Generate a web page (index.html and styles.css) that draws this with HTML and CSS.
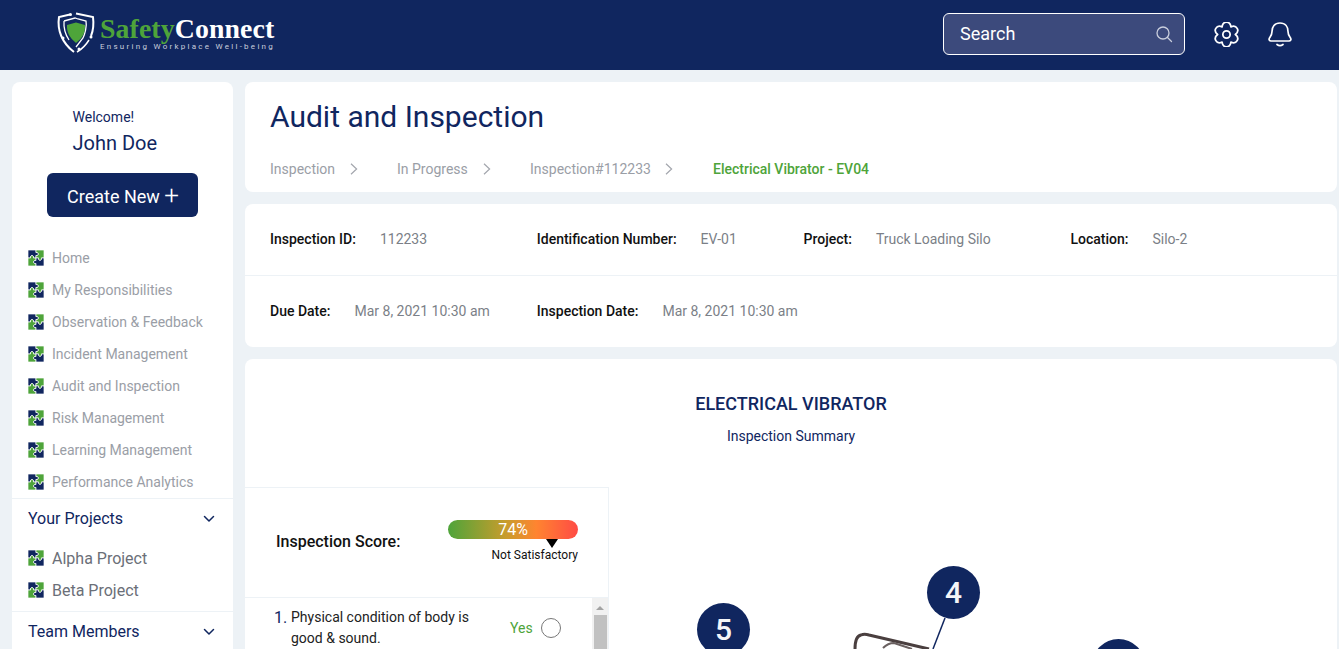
FILE: index.html
```html
<!DOCTYPE html>
<html lang="en">
<head>
<meta charset="utf-8">
<title>Audit and Inspection</title>
<link rel="stylesheet" href="styles.css">
</head>
<body>
<svg class="defs" width="0" height="0" aria-hidden="true">
  <symbol id="puzzle" viewBox="0 0 16 16">
    <rect width="16" height="16" fill="#fff"/>
    <g stroke="#fff" stroke-width=".7">
      <path fill="#10265f" d="M0 0h8v2.600c1.500-.6 2.400.5 2.400 1.400S9.500 6 8 5.400V8H5.400c.6-1.500-.5-2.400-1.400-2.400S2 6.500 2.600 8H0z"/>
      <path fill="#4ea43a" d="M8 0h8v8h-2.600c.6 1.500-.5 2.400-1.400 2.400S10 9.500 10.600 8H8V5.400c1.500.6 2.400-.5 2.400-1.400S9.500 2 8 2.600z"/>
      <path fill="#4ea43a" d="M0 8h2.600c-.6-1.500.5-2.400 1.400-2.400S6 6.500 5.400 8H8v2.600c-1.500-.6-2.400.5-2.400 1.400S6.500 14 8 13.400V16H0z"/>
      <path fill="#10265f" d="M8 8h2.600c-.6 1.500.5 2.400 1.400 2.400s2-.9 1.400-2.400H16v8H8v-2.600c-1.500.6-2.400-.5-2.400-1.400s.9-2 2.400-1.400z"/>
    </g>
  </symbol>
  <symbol id="chev" viewBox="0 0 12 8">
    <path d="M1.500 1.500 6 6l4.500-4.500" fill="none" stroke="#10265f" stroke-width="1.500" stroke-linecap="round" stroke-linejoin="round"/>
  </symbol>
  <symbol id="crumb" viewBox="0 0 8 12">
    <path d="M1 .8 6.600 6 1 11.200" fill="none" stroke="#a3a6ad" stroke-width="1.200"/>
  </symbol>
</svg>

<header class="topbar">
  <div class="logo">
    <svg class="logo-mark" width="40" height="42" viewBox="0 0 40 42" fill="none">
      <path d="M14 2.500 3 5c-2 13 3 26 15 35" stroke="#fff" stroke-width="2"/>
      <path d="M20 1.500 37 5c1 8 .5 13-2 19" stroke="#fff" stroke-width="2"/>
      <path d="M33 28c-3 5-7 9-12 12" stroke="#fff" stroke-width="1.500"/>
      <path d="M8 9l11-3 3 1 8 2c1 5-1 13-3 17l-7 9M8 9c-.5 7 1 13 5 19" stroke="#fff" stroke-width="1.300"/>
      <path d="M11 13 20 10.500l9 2.500c.3 7-1.500 12-9 18-7-6-9.300-11-9-18z" fill="#4ea43a"/>
      <g fill="#fff">
        <circle cx="14.500" cy="2.500" r="1.500"/><circle cx="35" cy="25" r="1.500"/><circle cx="7" cy="26" r="1.500"/><circle cx="23" cy="37" r="1.500"/>
      </g>
    </svg>
    <div class="logo-text">
      <div class="logo-name"><span class="logo-green">Safety</span>Connect</div>
      <div class="logo-tag">Ensuring Workplace Well-being</div>
    </div>
  </div>
  <div class="top-actions">
    <div class="search">
      <span>Search</span>
      <svg width="18" height="18" viewBox="0 0 18 18"><circle cx="8" cy="8" r="6" fill="none" stroke="#c9cedd" stroke-width="1.300"/><path d="m12.500 12.500 4 4" stroke="#c9cedd" stroke-width="1.300" stroke-linecap="round"/></svg>
    </div>
    <svg class="gear" width="25" height="25" viewBox="1 1 24 24" fill="none" stroke="#fff" stroke-width="1.700" stroke-linejoin="round">
      <circle cx="13" cy="13" r="3.500"/>
      <path d="M8.750 5.640C9.500-.3 16.500-.3 17.250 5.640 22.770 3.320 26.270 9.380 21.500 13 26.270 16.620 22.770 22.680 17.250 20.360 16.500 26.300 9.500 26.300 8.750 20.360 3.230 22.680-.27 16.620 4.500 13-.27 9.380 3.230 3.320 8.750 5.640z"/>
    </svg>
    <svg class="bell" width="26" height="26" viewBox="0 0 26 26" fill="none" stroke="#fff" stroke-width="1.700" stroke-linecap="round" stroke-linejoin="round">
      <path d="M13 2C7.500 2 5 6 5 10.500 5 14 3.500 15.500 2.500 17 1.500 18.700 2.500 20 4 20H22c1.500 0 2.500-1.300 1.500-3C22.500 15.500 21 14 21 10.500 21 6 18.500 2 13 2z"/>
      <path d="M10 23.500c1.700 1.200 4.300 1.200 6 0"/>
    </svg>
  </div>
</header>

<div class="layout">
  <aside class="sidebar">
    <div class="welcome">
      <div class="welcome-small">Welcome!</div>
      <div class="welcome-name">John Doe</div>
    </div>
    <button class="create" type="button">Create New <span class="plus">+</span></button>
    <ul class="nav">
      <li><svg class="pz"><use href="#puzzle"/></svg>Home</li>
      <li><svg class="pz"><use href="#puzzle"/></svg>My Responsibilities</li>
      <li><svg class="pz"><use href="#puzzle"/></svg>Observation &amp; Feedback</li>
      <li><svg class="pz"><use href="#puzzle"/></svg>Incident Management</li>
      <li><svg class="pz"><use href="#puzzle"/></svg>Audit and Inspection</li>
      <li><svg class="pz"><use href="#puzzle"/></svg>Risk Management</li>
      <li><svg class="pz"><use href="#puzzle"/></svg>Learning Management</li>
      <li><svg class="pz"><use href="#puzzle"/></svg>Performance Analytics</li>
    </ul>
    <div class="section">
      <div class="section-head">Your Projects<svg class="chev"><use href="#chev"/></svg></div>
      <ul class="nav nav-projects">
        <li><svg class="pz"><use href="#puzzle"/></svg>Alpha Project</li>
        <li><svg class="pz"><use href="#puzzle"/></svg>Beta Project</li>
      </ul>
    </div>
    <div class="section">
      <div class="section-head">Team Members<svg class="chev"><use href="#chev"/></svg></div>
    </div>
  </aside>

  <main class="main">
    <section class="card title-card">
      <h1>Audit and Inspection</h1>
      <nav class="crumbs">
        <span class="crumb c1">Inspection<svg class="crumb-ic"><use href="#crumb"/></svg></span>
        <span class="crumb c2">In Progress<svg class="crumb-ic"><use href="#crumb"/></svg></span>
        <span class="crumb c3">Inspection#112233<svg class="crumb-ic"><use href="#crumb"/></svg></span>
        <span class="crumb-current">Electrical Vibrator - EV04</span>
      </nav>
    </section>

    <section class="card info-card">
      <div class="info-row">
        <div class="info"><b>Inspection ID:</b><span>112233</span></div>
        <div class="info"><b>Identification Number:</b><span>EV-01</span></div>
        <div class="info"><b>Project:</b><span>Truck Loading Silo</span></div>
        <div class="info"><b>Location:</b><span>Silo-2</span></div>
      </div>
      <div class="info-row">
        <div class="info"><b>Due Date:</b><span>Mar 8, 2021 10:30 am</span></div>
        <div class="info"><b>Inspection Date:</b><span>Mar 8, 2021 10:30 am</span></div>
      </div>
    </section>

    <section class="card summary">
      <h2>ELECTRICAL VIBRATOR</h2>
      <p class="sub">Inspection Summary</p>
      <div class="summary-body">
        <div class="panel">
          <div class="score">
            <div class="score-label">Inspection Score:</div>
            <div class="gauge">
              <div class="bar">74%</div>
              <i class="pointer"></i>
              <div class="verdict">Not Satisfactory</div>
            </div>
          </div>
          <div class="checks">
            <div class="check">
              <span class="num">1.</span>
              <span class="check-text">Physical condition of body is good &amp; sound.</span>
              <span class="yes">Yes</span>
              <i class="radio"></i>
            </div>
            <div class="scrollbar"><i class="arrow"></i><i class="thumb"></i></div>
          </div>
        </div>
        <div class="diagram">
          <svg class="machine" width="728" height="162" viewBox="0 0 728 162" fill="none">
            <path d="M336 131 324 162" stroke="#10265f" stroke-width="1.500"/>
            <path d="M246 162c0-6 1-13 6-14 2-1 5-1 8 0l60 14" stroke="#4a3f3f" stroke-width="3"/>
            <path d="M274 161c3-3 7-5 11-5l18 6" stroke="#6a6060" stroke-width="2"/>
          </svg>
          <div class="pin pin5">5</div>
          <div class="pin pin4">4</div>
          <div class="pin pin3"></div>
        </div>
      </div>
    </section>
  </main>
</div>
</body>
</html>
```
FILE: styles.css
```css
* { box-sizing: border-box; }
html, body { height: 100%; }
body {
  margin: 0;
  overflow: hidden;
  background: #edf2f6;
  font-family: Roboto, "Liberation Sans", sans-serif;
  color: #10265f;
}
.defs { position: absolute; }
ul { list-style: none; margin: 0; padding: 0; }

.topbar {
  height: 70px;
  background: #10265f;
  display: flex;
  align-items: center;
  justify-content: space-between;
  padding: 0 46px 0 56px;
}
.logo { display: flex; align-items: center; gap: 4px; margin-top: -4px; }
.logo-text { margin-top: 2px; }
.logo-name {
  font-family: "Liberation Serif", serif;
  font-weight: 700;
  font-size: 27.800px;
  line-height: 26px;
  color: #fff;
  letter-spacing: .1px;
}
.logo-green { color: #4ea43a; }
.logo-tag {
  font-size: 8px;
  line-height: 10px;
  letter-spacing: 2.260px;
  color: #c9cedd;
  white-space: nowrap;
}
.top-actions { display: flex; align-items: center; margin-bottom: 2px; }
.search {
  width: 242px;
  height: 42px;
  background: #3c4a7c;
  border: 1px solid #fff;
  border-radius: 6px;
  display: flex;
  align-items: center;
  justify-content: space-between;
  padding: 0 11px 2px 16px;
  color: #fff;
  font-size: 18px;
}
.search svg { margin-top: 2px; }
.gear { margin-left: 29px; }
.bell { margin-left: 28px; }

.layout {
  display: flex;
  gap: 12px;
  padding: 12px 2px 0 12px;
  align-items: flex-start;
}
.sidebar {
  width: 221px;
  flex: none;
  background: #fff;
  border-radius: 8px 8px 0 0;
  padding-top: 25px;
}
.welcome { padding-left: 60.500px; }
.welcome-small { font-size: 14px; line-height: 20px; }
.welcome-name { font-size: 20px; line-height: 24px; margin-top: 4px; }
.create {
  display: block;
  width: 151px;
  height: 44px;
  margin: 18px 0 0 35px;
  background: #10265f;
  color: #fff;
  border: 0;
  border-radius: 6px;
  font: 400 18px Roboto, sans-serif;
  padding: 2px 0 0 1px;
}
.plus { font-size: 26px; font-weight: 300; line-height: 20px; vertical-align: -1px; }
.nav { margin-top: 25px; }
.nav li {
  height: 32px;
  display: flex;
  align-items: center;
  gap: 8px;
  padding-left: 16px;
  font-size: 14px;
  color: #9a9ea6;
}
.pz { width: 16px; height: 16px; flex: none; }
.section { border-top: 1px solid #edf2f6; padding-bottom: 3px; }
.section-head {
  height: 39px;
  display: flex;
  align-items: center;
  justify-content: space-between;
  padding: 0 18px 0 16px;
  font-size: 16px;
}
.chev { width: 12px; height: 8px; }
.nav-projects { margin-top: 4px; padding-bottom: 2px; }
.nav-projects li { font-size: 16px; color: #6b6f78; }

.main {
  flex: 1;
  min-width: 0;
  display: flex;
  flex-direction: column;
  gap: 12px;
}
.card { background: #fff; border-radius: 8px; }
.title-card { height: 110px; padding: 16px 25px 0; }
h1 {
  margin: 0;
  font-size: 30px;
  font-weight: 400;
  line-height: 38px;
  color: #10265f;
}
.crumbs {
  display: flex;
  align-items: center;
  margin-top: 23px;
  font-size: 14px;
  line-height: 20px;
  color: #9a9ea6;
  white-space: nowrap;
}
.crumb { display: flex; align-items: center; }
.crumb-ic { width: 8px; height: 12px; }
.c1 { width: 127px; }
.c1 .crumb-ic { margin-left: 15px; }
.c2 { width: 133px; }
.c2 .crumb-ic { margin-left: 15px; }
.c3 { width: 183px; }
.c3 .crumb-ic { margin-left: 14px; }
.crumb-current { color: #4ea43a; font-weight: 500; }

.info-card { height: 143px; }
.info-row {
  height: 71px;
  padding: 0 0 1px 25px;
  display: grid;
  grid-template-columns: repeat(4, 266.800px);
  align-items: center;
  font-size: 14px;
}
.info-row:first-child { height: 72px; border-bottom: 1px solid #edf2f6; }
.info { display: flex; gap: 24px; white-space: nowrap; color: #7b7f87; }
.info b { font-weight: 500; color: #111; }

.summary { height: 290px; border-radius: 8px 8px 0 0; text-align: center; }
h2 {
  margin: 0;
  padding-top: 33px;
  font-size: 18px;
  font-weight: 500;
  line-height: 24px;
  color: #10265f;
}
.sub { margin: 10px 0 0; font-size: 14px; line-height: 20px; color: #10265f; }
.summary-body { display: flex; margin-top: 41px; text-align: left; }
.panel {
  width: 364px;
  flex: none;
  height: 162px;
  border: 1px solid #edf2f6;
  border-bottom: 0;
  border-left: 0;
}
.score {
  height: 110px;
  border-bottom: 1px solid #edf2f6;
  display: flex;
  justify-content: space-between;
  align-items: center;
  padding: 0 30px 0 31px;
}
.score-label { font-size: 16px; font-weight: 500; color: #111; margin-bottom: 2px; }
.gauge { width: 130px; position: relative; margin-top: -3px; }
.bar {
  height: 19px;
  border-radius: 10px;
  background: linear-gradient(90deg, #4ea43a 0%, #c99c2c 45%, #ff8430 68%, #ff4b45 100%);
  color: #fff;
  font-size: 16px;
  line-height: 19px;
  text-align: center;
}
.pointer {
  position: absolute;
  left: 98px;
  top: 19px;
  border-left: 6px solid transparent;
  border-right: 6px solid transparent;
  border-top: 9px solid #000;
}
.verdict {
  margin-top: 8px;
  font-size: 12px;
  line-height: 16px;
  text-align: right;
  color: #111;
  white-space: nowrap;
}
.checks { position: relative; height: 51px; overflow: hidden; }
.check {
  display: flex;
  align-items: center;
  padding: 9px 0 0 29px;
  color: #10265f;
}
.num { font-size: 16px; width: 17px; align-self: flex-start; line-height: 21px; }
.check-text { width: 196px; font-size: 14px; line-height: 21px; color: #222; margin-right: 23px; }
.yes { font-size: 14px; color: #4ea43a; margin-right: 8px; }
.radio {
  width: 20px;
  height: 20px;
  border-radius: 50%;
  border: 1.500px solid #777;
  flex: none;
}
.scrollbar {
  position: absolute;
  right: 0;
  top: 0;
  bottom: 0;
  width: 16px;
  background: #f1f1f1;
}
.arrow {
  position: absolute;
  left: 4px;
  top: 8px;
  border-left: 4px solid transparent;
  border-right: 4px solid transparent;
  border-bottom: 4px solid #a3a3a3;
}
.thumb {
  position: absolute;
  left: 2px;
  right: 1px;
  top: 17px;
  bottom: 0;
  background: #c1c1c1;
}
.diagram { flex: 1; position: relative; height: 162px; overflow: hidden; }
.machine { position: absolute; left: 0; top: 0; }
.pin {
  position: absolute;
  width: 53px;
  height: 53px;
  border-radius: 50%;
  background: #10265f;
  color: #f4f5f8;
  font-size: 30px;
  font-weight: 500;
  line-height: 53px;
  text-align: center;
}
.pin5 { left: 88px; top: 116px; }
.pin4 { left: 318px; top: 79px; }
.pin3 { left: 483px; top: 152px; }
```
